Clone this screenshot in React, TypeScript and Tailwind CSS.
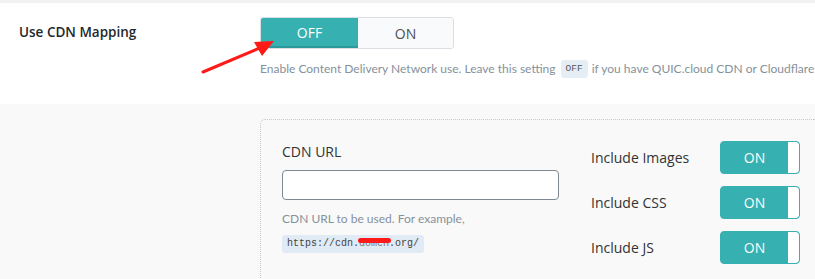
import React from "react";

const font = { fontFamily: '"Open Sans", "Noto Sans", sans-serif' };

function SmallToggle() {
  return (
    <div className="flex h-[33px] w-[80px] overflow-hidden rounded-[4px] border border-[#36b0b0] bg-[#36b0b0]">
      <div className="flex flex-1 items-center justify-center text-[14px] text-white">ON</div>
      <div className="w-[11px] rounded-r-[3px] bg-white" />
    </div>
  );
}

export default function App() {
  const rows = ["Include Images", "Include CSS", "Include JS"];
  return (
    <div className="relative h-[279px] w-[815px] overflow-hidden bg-[#f9f9f9]" style={font}>
      {/* top strip */}
      <div className="h-[3px] bg-[#f1f1f1]" />

      {/* Use CDN Mapping row */}
      <div className="flex h-[101px] bg-white">
        <div className="w-[260px] shrink-0 pl-[19px] pt-[19px] text-[13.5px] font-semibold text-[#23282d]">
          Use CDN Mapping
        </div>
        <div className="pt-[14px]">
          <div className="flex h-[32px] w-[194px] overflow-hidden rounded-[3px] border border-[#dadde1]">
            <div className="flex w-[97px] items-center justify-center border-b-2 border-[#2a9a9a] bg-[#36b0b0] text-[14px] text-white">
              OFF
            </div>
            <div className="flex flex-1 items-center justify-center bg-[#f9fafb] text-[14px] text-[#4a4f57]">
              ON
            </div>
          </div>
          <div className="mt-[11px] flex items-center whitespace-nowrap font-['Lato',sans-serif] text-[12px] text-[#86919b]">
            Enable Content Delivery Network use. Leave this setting
            <span className="ml-[5px] mr-[4px] rounded-[3px] bg-[#e6eef5] px-[5px] py-[2px] font-['Liberation_Mono',monospace] text-[9.5px] text-[#555]">
              OFF
            </span>
            if you have QUIC.cloud CDN or Cloudflare
          </div>
        </div>
      </div>

      {/* CDN box */}
      <div className="pl-[260px] pt-[15px]">
        <div className="flex h-[200px] rounded-tl-[5px] border-l border-t border-dotted border-[#c8c8c8] pl-[21px] pt-[21px]">
          <div className="w-[309px] shrink-0">
            <div className="text-[14px] text-[#333]">CDN URL</div>
            <div className="mt-[8px] h-[30px] w-[277px] rounded-[4px] border border-[#7e8993] bg-white" />
            <div className="mt-[10px] font-['Lato',sans-serif] text-[12px] text-[#86919b]">
              CDN URL to be used. For example,
            </div>
            <div className="mt-[2px] inline-flex h-[18px] items-center rounded-[3px] bg-[#e1ebf5] px-[5px] font-['Liberation_Mono',monospace] text-[10px] text-[#444]">
              https://cdn.
              <span className="relative">
                <span className="text-[#777]">domen</span>
                <span className="absolute -left-px -right-[2px] top-[2px] h-[5px] rounded-full bg-[#ff1a1a]" />
              </span>
              .org/
            </div>
          </div>
          <div className="flex flex-col gap-[12px]">
            {rows.map((r) => (
              <div key={r} className="flex items-center">
                <div className="w-[129px] text-[14px] text-[#333]">{r}</div>
                <SmallToggle />
              </div>
            ))}
          </div>
        </div>
      </div>

      {/* red arrow */}
      <svg className="absolute left-0 top-0" width="815" height="279" viewBox="0 0 815 279">
        <line x1="203" y1="72" x2="262" y2="47" stroke="#ff1a1a" strokeWidth="3" strokeLinecap="round" />
        <polygon points="274,41 254,42 262,56" fill="#ff1a1a" />
      </svg>
    </div>
  );
}
